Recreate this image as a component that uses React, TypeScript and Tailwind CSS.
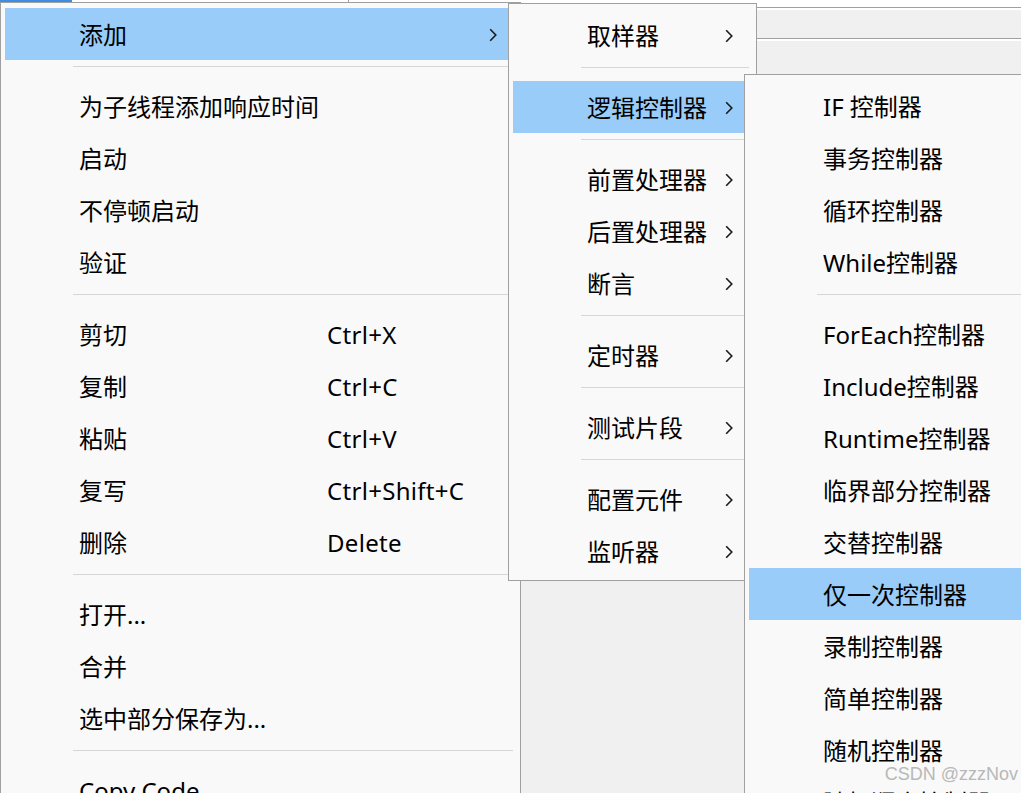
import React from "react";

type Item =
  | { label: string; shortcut?: string; sub?: boolean; active?: boolean }
  | "sep";

const MAIN: Item[] = [
  { label: "添加", sub: true, active: true },
  "sep",
  { label: "为子线程添加响应时间" },
  { label: "启动" },
  { label: "不停顿启动" },
  { label: "验证" },
  "sep",
  { label: "剪切", shortcut: "Ctrl+X" },
  { label: "复制", shortcut: "Ctrl+C" },
  { label: "粘贴", shortcut: "Ctrl+V" },
  { label: "复写", shortcut: "Ctrl+Shift+C" },
  { label: "删除", shortcut: "Delete" },
  "sep",
  { label: "打开..." },
  { label: "合并" },
  { label: "选中部分保存为..." },
  "sep",
  { label: "Copy Code" },
];

const ADD: Item[] = [
  { label: "取样器", sub: true },
  "sep",
  { label: "逻辑控制器", sub: true, active: true },
  "sep",
  { label: "前置处理器", sub: true },
  { label: "后置处理器", sub: true },
  { label: "断言", sub: true },
  "sep",
  { label: "定时器", sub: true },
  "sep",
  { label: "测试片段", sub: true },
  "sep",
  { label: "配置元件", sub: true },
  { label: "监听器", sub: true },
];

const LOGIC: Item[] = [
  { label: "IF 控制器" },
  { label: "事务控制器" },
  { label: "循环控制器" },
  { label: "While控制器" },
  "sep",
  { label: "ForEach控制器" },
  { label: "Include控制器" },
  { label: "Runtime控制器" },
  { label: "临界部分控制器" },
  { label: "交替控制器" },
  { label: "仅一次控制器", active: true },
  { label: "录制控制器" },
  { label: "简单控制器" },
  { label: "随机控制器" },
  { label: "随机顺序控制器" },
];

function Chevron() {
  return (
    <svg width="8" height="14" viewBox="0 0 8 14" className="shrink-0">
      <path d="M1.2 1.2 L6.8 7 L1.2 12.8" fill="none" stroke="#1a1a1a" strokeWidth="1.6" />
    </svg>
  );
}

function Menu({ items, className }: { items: Item[]; className: string }) {
  return (
    <div className={`absolute border border-[#a0a0a0] bg-[#f9f9f9] px-[4px] pt-[5px] ${className}`}>
      {items.map((it, i) =>
        it === "sep" ? (
          <div key={i} className="h-[20px] pt-[6px] pl-[68px] pr-[3px]">
            <div className="h-px bg-[#d6d6d6]" />
          </div>
        ) : (
          <div
            key={i}
            className={`flex h-[52px] items-center pl-[74px] pr-[19px] pt-[1px] ${it.active ? "bg-[#99ccf8]" : ""}`}
          >
            {it.shortcut ? (
              <>
                <span className="w-[248px] shrink-0 whitespace-nowrap">{it.label}</span>
                <span className="flex-1 whitespace-nowrap tracking-[0.3px]">{it.shortcut}</span>
              </>
            ) : (
              <span className="min-w-0 flex-1 whitespace-nowrap">{it.label}</span>
            )}
            {it.sub && <Chevron />}
          </div>
        )
      )}
    </div>
  );
}

export default function App() {
  return (
    <div
      className="relative h-[793px] w-[1021px] overflow-hidden bg-[#f0f0f0] text-[24px] text-black"
      style={{ fontFamily: '"Noto Sans", "Noto Sans CJK SC", sans-serif' }}
    >
      <div className="flex h-[7px] items-start bg-white">
        <div className="h-[2px] w-[72px] bg-[#3d8ee0]" />
        <div className="ml-[276px] h-[3px] w-px bg-[#a0a0a0]" />
      </div>
      <div className="h-px bg-[#a0a0a0]" />
      <div className="h-[2px] bg-white" />
      <div className="h-[28px]" />
      <div className="h-px bg-[#a0a0a0]" />
      <div className="h-[2px] bg-white" />

      <Menu items={MAIN} className="left-0 top-[2px] w-[521px]" />
      <Menu items={ADD} className="left-[508px] top-[3px] w-[249px] pb-[3px]" />
      <Menu items={LOGIC} className="left-[744px] top-[74px] w-[300px]" />

      <div
        className="absolute bottom-[5px] right-[3px] text-[18px] text-[#b8b8b8]"
        style={{ fontFamily: '"Liberation Sans", sans-serif' }}
      >
        CSDN @zzzNov
      </div>
    </div>
  );
}
